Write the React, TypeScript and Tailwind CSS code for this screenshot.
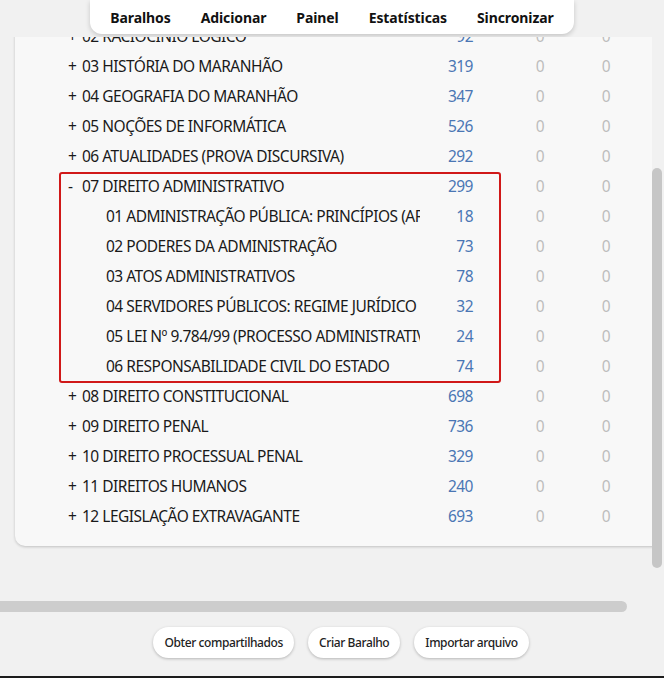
import React from "react";

type Row = { name: string; count: number; prefix?: "+" | "-" | ""; child?: boolean };

const before: Row[] = [
  { name: "02 RACIOCÍNIO LÓGICO", count: 92, prefix: "+" },
  { name: "03 HISTÓRIA DO MARANHÃO", count: 319, prefix: "+" },
  { name: "04 GEOGRAFIA DO MARANHÃO", count: 347, prefix: "+" },
  { name: "05 NOÇÕES DE INFORMÁTICA", count: 526, prefix: "+" },
  { name: "06 ATUALIDADES (PROVA DISCURSIVA)", count: 292, prefix: "+" },
];

const group: Row[] = [
  { name: "07 DIREITO ADMINISTRATIVO", count: 299, prefix: "-" },
  { name: "01 ADMINISTRAÇÃO PÚBLICA: PRINCÍPIOS (ART. 37 DA CF/88)", count: 18, child: true },
  { name: "02 PODERES DA ADMINISTRAÇÃO", count: 73, child: true },
  { name: "03 ATOS ADMINISTRATIVOS", count: 78, child: true },
  { name: "04 SERVIDORES PÚBLICOS: REGIME JURÍDICO", count: 32, child: true },
  { name: "05 LEI Nº 9.784/99 (PROCESSO ADMINISTRATIVO)", count: 24, child: true },
  { name: "06 RESPONSABILIDADE CIVIL DO ESTADO", count: 74, child: true },
];

const after: Row[] = [
  { name: "08 DIREITO CONSTITUCIONAL", count: 698, prefix: "+" },
  { name: "09 DIREITO PENAL", count: 736, prefix: "+" },
  { name: "10 DIREITO PROCESSUAL PENAL", count: 329, prefix: "+" },
  { name: "11 DIREITOS HUMANOS", count: 240, prefix: "+" },
  { name: "12 LEGISLAÇÃO EXTRAVAGANTE", count: 693, prefix: "+" },
];

function DeckRow({ r }: { r: Row }) {
  return (
    <div className="flex h-[30px] items-center">
      <div className="w-[352px] overflow-hidden whitespace-nowrap text-[#1a1a1a]">
        {r.child ? (
          <span className="pl-[38px]">{r.name}</span>
        ) : (
          <>
            <span className="inline-block w-[14px]">{r.prefix}</span>
            <span>{r.name}</span>
          </>
        )}
      </div>
      <div className="w-[53px] text-right text-[#4a76b4]">{r.count}</div>
      <div className="w-[34px]" />
      <div className="w-[66px] text-center text-[#bdbdbd]">0</div>
      <div className="w-[66px] text-center text-[#bdbdbd]">0</div>
    </div>
  );
}

const btn =
  "h-[31px] rounded-full bg-white px-[11px] text-[12px] font-medium tracking-[-0.4px] text-[#222] shadow-[0_1px_3px_rgba(0,0,0,0.25)]";

export default function App() {
  return (
    <div
      className="relative flex h-[678px] w-[664px] flex-col overflow-hidden bg-[#f1f1f1]"
      style={{ fontFamily: '"Noto Sans", "Open Sans", sans-serif' }}
    >
      {/* top toolbar */}
      <div className="flex h-[37px] shrink-0 justify-center">
        <div className="flex h-[34px] items-center gap-[30px] rounded-b-[12px] bg-white px-[20px] text-[14px] font-bold tracking-[-0.1px] text-[#111] shadow-[0_2px_5px_rgba(0,0,0,0.18)]">
          <span>Baralhos</span>
          <span>Adicionar</span>
          <span>Painel</span>
          <span>Estatísticas</span>
          <span>Sincronizar</span>
        </div>
      </div>

      {/* main scroll viewport */}
      <div className="flex h-[580px] shrink-0">
        <div className="flex w-[652px] flex-col">
          <div className="h-[564px] overflow-hidden">
            <div className="-mt-[15px] ml-[15px] mr-[-20px] rounded-b-[10px] bg-[#f8f8f8] pb-[14px] pl-[53px] text-[15.5px] tracking-[-0.5px] shadow-[0_1px_3px_rgba(0,0,0,0.2)]">
              {before.map((r) => (
                <DeckRow key={r.name} r={r} />
              ))}
              <div className="relative">
                {group.map((r) => (
                  <DeckRow key={r.name} r={r} />
                ))}
                <div className="pointer-events-none absolute -left-[9px] top-0 h-[211px] w-[442px] rounded-[3px] border-2 border-[#d01818]" />
              </div>
              {after.map((r) => (
                <DeckRow key={r.name} r={r} />
              ))}
            </div>
          </div>
          <div className="h-[11px] w-[627px] rounded-r-full bg-[#cdcdcd]" />
        </div>
        <div className="w-[12px] pt-[131px]">
          <div className="h-[400px] w-[10px] rounded-full bg-[#c6c6c6]" />
        </div>
      </div>

      {/* bottom bar */}
      <div className="flex flex-1 items-start justify-center gap-[14px] pl-[18px] pt-[10px]">
        <button className={btn}>Obter compartilhados</button>
        <button className={btn}>Criar Baralho</button>
        <button className={btn}>Importar arquivo</button>
      </div>
      <div className="h-[2px] shrink-0 bg-[#1c1c1c]" />
    </div>
  );
}
